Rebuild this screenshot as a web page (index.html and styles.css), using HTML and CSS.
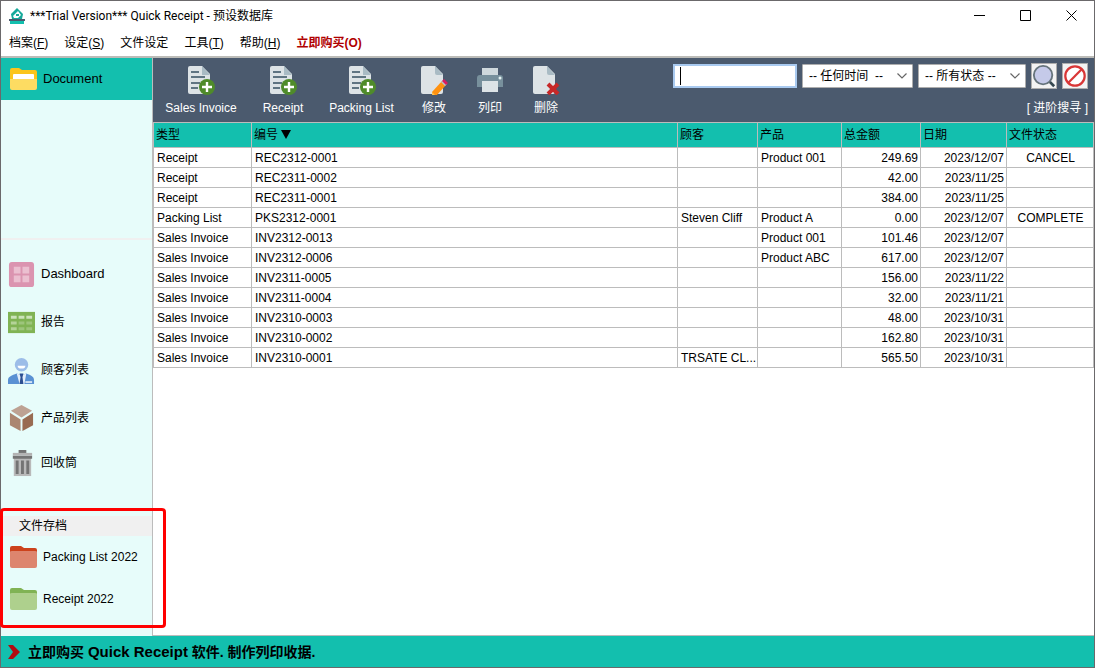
FILE: index.html
```html
<!DOCTYPE html>
<html lang="zh-CN">
<head>
<meta charset="utf-8">
<title>Quick Receipt</title>
<link rel="stylesheet" href="styles.css">
</head>
<body>
<svg class="defs" aria-hidden="true">
  <symbol id="page-add" viewBox="0 0 28 30">
    <path d="M3 1h12l8 8v18a2 2 0 0 1-2 2H3a2 2 0 0 1-2-2V3a2 2 0 0 1 2-2z" fill="#dde3e6"/>
    <path d="M15 1l8 9h-8z" fill="#a9bbc4"/>
    <path d="M4 7h8M4 12h14M4 18h9M4 23h7" stroke="#5f7482" stroke-width="2"/>
    <circle cx="20" cy="22" r="8" fill="#4f8b2a"/>
    <path d="M20 17v10M15 22h10" stroke="#fff" stroke-width="2.4"/>
  </symbol>
  <symbol id="page" viewBox="0 0 28 30">
    <path d="M3 1h12l8 8v18a2 2 0 0 1-2 2H3a2 2 0 0 1-2-2V3a2 2 0 0 1 2-2z" fill="#dde3e6"/>
    <path d="M15 1l8 9h-6a2 2 0 0 1-2-2z" fill="#a9bbc4"/>
  </symbol>
  <symbol id="chevron" viewBox="0 0 10 6"><path d="M.5.5L5 5 9.500.5" fill="none" stroke="#666" stroke-width="1.200"/></symbol>
</svg>
<div class="window">
  <header class="titlebar">
    <svg class="logo" viewBox="0 0 16 16"><path d="M8 0l6 6-1 5H3L2 6z" fill="#16a99a"/><path d="M4 8l5-5 3 4-3 3H5z" fill="#fff"/><path d="M7 6h3v2H7z" fill="#16a99a"/><path d="M0 11h16v2H0z" fill="#4b5a6d"/><path d="M1 13h14v3H1z" fill="#13bfae"/></svg>
    <h1>***Trial Version*** Quick Receipt - 预设数据库</h1>
    <div class="controls">
      <button aria-label="Minimize"><svg viewBox="0 0 11 11"><path d="M0 5.500h11" stroke="#000"/></svg></button>
      <button aria-label="Maximize"><svg viewBox="0 0 11 11"><path d="M.5.5h10v10H.5z" fill="none" stroke="#000"/></svg></button>
      <button aria-label="Close"><svg viewBox="0 0 11 11"><path d="M.5.5l10 10M10.500.5l-10 10" stroke="#000"/></svg></button>
    </div>
  </header>
  <nav class="menubar">
    <button>档案(<u>F</u>)</button>
    <button>设定(<u>S</u>)</button>
    <button>文件设定</button>
    <button>工具(<u>T</u>)</button>
    <button>帮助(<u>H</u>)</button>
    <button class="buy">立即购买(O)</button>
  </nav>
  <div class="body">
    <aside class="sidebar">
      <div class="folders">
        <a class="item current" href="#"><svg class="folder" viewBox="0 0 27 22"><path d="M0 2a2 2 0 0 1 2-2h7l3 2h13a2 2 0 0 1 2 2v8H0z" fill="#fbc51b"/><path d="M3 7a1 1 0 0 1 1-1h19a1 1 0 0 1 1 1v8H3z" fill="#fff"/><path d="M0 11h27v9a2 2 0 0 1-2 2H2a2 2 0 0 1-2-2z" fill="#fddc62"/></svg><span>Document</span></a>
      </div>
      <div class="links">
        <a class="item" href="#"><svg viewBox="0 0 28 28"><rect x="1" y="1" width="26" height="26" rx="3" fill="#db94b0"/><path d="M6 6h7v7H6zM15 6h7v7h-7zM6 15h7v7H6zM15 15h7v7h-7z" fill="#ebbfd0"/></svg><span>Dashboard</span></a>
        <a class="item" href="#"><svg viewBox="0 0 28 28"><path d="M0 3h28v22H0z" fill="#80b354"/><path d="M3 8.500h6M11 8.500h6M19 8.500h6" stroke="#cce2ba" stroke-width="3"/><path d="M3 14.500h6M3 20.500h6" stroke="#b4d398" stroke-width="3"/><path d="M11 14.500h6M19 14.500h6M11 20.500h6M19 20.500h6" stroke="#9dc57c" stroke-width="3"/></svg><span>报告</span></a>
        <a class="item" href="#"><svg viewBox="0 0 28 28"><circle cx="14" cy="8" r="7" fill="#9cbde8"/><path d="M10 9h8a4 3 0 0 1-8 0z" fill="#fff"/><path d="M0 28v-4c0-4 4-5 9-7l5 2 5-2c5 2 8 3 8 7v4z" fill="#5a91d3"/><path d="M9 17l5 2 5-2-2 11h-5z" fill="#e4eefa"/><path d="M12 17h4l-1 4 1 7h-4l1-7z" fill="#2d4f91"/><path d="M18 25h7v2h-7z" fill="#d4e3f5"/></svg><span>顾客列表</span></a>
        <a class="item" href="#"><svg viewBox="0 0 28 28"><path d="M14 0l11 6-11 7L3 6z" fill="#bda293"/><path d="M2 8l11 7v12L2 21z" fill="#ab8671"/><path d="M26 8l-11 7v12l11-6z" fill="#986b51"/></svg><span>产品列表</span></a>
        <a class="item" href="#"><svg viewBox="0 0 28 28"><path d="M6 7h18v20H6z" fill="#b9b9b9"/><path d="M11 0h8v3h-8zM5 6h20v3H5z" fill="#747474"/><path d="M5 3h20v3H5z" fill="#b3b3b3"/><path d="M9.500 11v14M15 11v14M20.500 11v14" stroke="#747474" stroke-width="3"/></svg><span>回收筒</span></a>
      </div>
      <div class="archive">
        <h2>文件存档</h2>
        <a class="item" href="#"><svg class="folder" viewBox="0 0 27 22"><path d="M0 2a2 2 0 0 1 2-2h9l3 2h11a2 2 0 0 1 2 2v5H0z" fill="#cc421c"/><path d="M0 6q0-1 2-1h23q2 0 2 1v14a2 2 0 0 1-2 2H2a2 2 0 0 1-2-2z" fill="#dd856e"/></svg><span>Packing List 2022</span></a>
        <a class="item" href="#"><svg class="folder" viewBox="0 0 27 22"><path d="M0 2a2 2 0 0 1 2-2h9l3 2h11a2 2 0 0 1 2 2v5H0z" fill="#80b354"/><path d="M0 6q0-1 2-1h23q2 0 2 1v14a2 2 0 0 1-2 2H2a2 2 0 0 1-2-2z" fill="#aed08d"/></svg><span>Receipt 2022</span></a>
      </div>
    </aside>
    <main class="main">
      <div class="toolbar">
        <div class="tools">
          <button><svg><use href="#page-add"/></svg>Sales Invoice</button>
          <button><svg><use href="#page-add"/></svg>Receipt</button>
          <button><svg><use href="#page-add"/></svg>Packing List</button>
          <button><svg viewBox="0 0 28 30"><use href="#page"/><path d="M12 27l10-11 4 4-10 11-4 0z" fill="#ff9210"/><path d="M12 27l4 4h-4z" fill="#ffc04a"/><path d="M21 17l2-2 4 4-2 2z" fill="#b8c4ca"/><path d="M22 16l2-2 4 4-2 2z" fill="#d81b60"/></svg>修改</button>
          <button><svg viewBox="0 0 28 30"><path d="M6 3h16v7H6z" fill="#cfd8dc"/><path d="M1 13a3 3 0 0 1 3-3h20a3 3 0 0 1 3 3v9H1z" fill="#78909c"/><path d="M6 16h16v11H6z" fill="#dde3e6"/><circle cx="24" cy="13" r="1.500" fill="#e6f4f4"/></svg>列印</button>
          <button><svg viewBox="0 0 28 30"><use href="#page"/><path d="M16 19l10 10M26 19L16 29" stroke="#c62828" stroke-width="4"/></svg>删除</button>
        </div>
        <form class="search">
          <label class="field"><input type="text" aria-label="搜寻"><span class="caret"></span></label>
          <label class="field time"><select aria-label="时间"><option>-- 任何时间 &nbsp;--</option></select><svg><use href="#chevron"/></svg></label>
          <label class="field state"><select aria-label="状态"><option>-- 所有状态 --</option></select><svg><use href="#chevron"/></svg></label>
          <button type="button" aria-label="搜寻"><svg viewBox="0 0 26 26"><path d="M18 18l6 6" stroke="#35474f" stroke-width="3"/><circle cx="12" cy="12" r="10" fill="#c5cae9" stroke="#66747c" stroke-width="2"/></svg></button>
          <button type="button" aria-label="清除"><svg viewBox="0 0 26 26"><circle cx="13" cy="13" r="10.500" fill="#fff" stroke="#d93636" stroke-width="2.400"/><path d="M6 20L20 6" stroke="#d93636" stroke-width="2.400"/></svg></button>
          <a href="#">[ 进阶搜寻 ]</a>
        </form>
      </div>
      <table>
        <colgroup><col class="c-type"><col><col class="c-customer"><col class="c-product"><col class="c-total"><col class="c-date"><col class="c-status"></colgroup>
        <thead><tr><th>类型</th><th>编号 <svg class="sort" viewBox="0 0 10 9"><path d="M0 0h10L5 9z"/></svg></th><th>顾客</th><th>产品</th><th>总金额</th><th>日期</th><th>文件状态</th></tr></thead>
        <tbody>
          <tr><td>Receipt</td><td>REC2312-0001</td><td></td><td>Product 001</td><td>249.69</td><td>2023/12/07</td><td>CANCEL</td></tr>
          <tr><td>Receipt</td><td>REC2311-0002</td><td></td><td></td><td>42.00</td><td>2023/11/25</td><td></td></tr>
          <tr><td>Receipt</td><td>REC2311-0001</td><td></td><td></td><td>384.00</td><td>2023/11/25</td><td></td></tr>
          <tr><td>Packing List</td><td>PKS2312-0001</td><td>Steven Cliff</td><td>Product A</td><td>0.00</td><td>2023/12/07</td><td>COMPLETE</td></tr>
          <tr><td>Sales Invoice</td><td>INV2312-0013</td><td></td><td>Product 001</td><td>101.46</td><td>2023/12/07</td><td></td></tr>
          <tr><td>Sales Invoice</td><td>INV2312-0006</td><td></td><td>Product ABC</td><td>617.00</td><td>2023/12/07</td><td></td></tr>
          <tr><td>Sales Invoice</td><td>INV2311-0005</td><td></td><td></td><td>156.00</td><td>2023/11/22</td><td></td></tr>
          <tr><td>Sales Invoice</td><td>INV2311-0004</td><td></td><td></td><td>32.00</td><td>2023/11/21</td><td></td></tr>
          <tr><td>Sales Invoice</td><td>INV2310-0003</td><td></td><td></td><td>48.00</td><td>2023/10/31</td><td></td></tr>
          <tr><td>Sales Invoice</td><td>INV2310-0002</td><td></td><td></td><td>162.80</td><td>2023/10/31</td><td></td></tr>
          <tr><td>Sales Invoice</td><td>INV2310-0001</td><td>TRSATE CL...</td><td></td><td>565.50</td><td>2023/10/31</td><td></td></tr>
        </tbody>
      </table>
    </main>
  </div>
  <footer class="promo">
    <svg viewBox="0 0 12 14"><path d="M0 0h5l7 7-7 7H0l5-7z" fill="#b30d12"/></svg>
    <a href="#">立即购买 <b>Quick Receipt</b> 软件. 制作列印收据.</a>
  </footer>
</div>
</body>
</html>
```
FILE: styles.css
```css
* { box-sizing: border-box; }
body { margin: 0; font: 12px/16px "Liberation Sans", "Noto Sans CJK SC", sans-serif; color: #000; }
button, input, select { font: inherit; color: inherit; }
button { border: 0; padding: 0; background: none; }
a { color: inherit; text-decoration: none; }
svg { display: block; flex: none; }
.defs { display: none; }

.window { display: flex; flex-direction: column; min-height: 100vh; border: 1px solid #6b696b; background: #fff; }

.titlebar { display: flex; align-items: center; gap: 5px; height: 29px; padding-left: 8px; }
.logo { width: 16px; height: 16px; }
.titlebar h1 { flex: 1; margin: 0; font: 12px/16px Roboto, "Noto Sans CJK SC", sans-serif; }
.controls { display: flex; }
.controls button { width: 46px; height: 28px; display: grid; place-items: center; }
.controls svg { width: 11px; height: 11px; }

.menubar { display: flex; gap: 16px; height: 28px; padding: 0 8px; border-bottom: 2px solid #bcbcb8; }
.menubar .buy { color: #b00000; font-weight: bold; }

.body { flex: 1; display: flex; }
.sidebar { width: 151px; flex: none; display: flex; flex-direction: column; background: #e7fcfa; }
.item { display: flex; align-items: center; gap: 6px; height: 42px; padding-left: 9px; }
.item svg { width: 27px; height: 27px; }
.item .folder { height: 22px; }
.folders { height: 182px; border-bottom: 2px solid #f0f0f0; }
.current { background: #13bfae; font-size: 13px; }
.links { padding-top: 10px; font-size: 12px; }
.links .item { height: 48px; padding-left: 7px; }
.links .item:first-child { font-size: 13px; }
.links .item:last-child { height: 42px; }
.archive { position: relative; margin-top: auto; padding-bottom: 16px; }
.archive::after { content: ""; position: absolute; inset: -8px -14px 8px -1px; border: 3px solid #f00; border-radius: 4px; pointer-events: none; }
.archive h2 { margin: 0; padding: 2px 18px; background: #f0f0f0; font: inherit; }

.main { flex: 1; min-width: 0; border-left: 1px solid #bcbcbc; border-bottom: 1px solid #bcbcbc; }
.toolbar { display: flex; justify-content: space-between; height: 64px; background: #4b5a6e; color: #fff; }
.tools { display: grid; grid-template-columns: 96px 68px 89px 56px 56px 56px; }
.tools button { display: flex; flex-direction: column; align-items: center; gap: 5px; padding-top: 7px; }
.tools svg { width: 28px; height: 30px; }
.search { display: grid; grid-template-columns: 124px 111px 108px 26px 26px; grid-template-rows: 26px 18px; column-gap: 5px; row-gap: 10px; padding: 5px 6px 0 0; align-items: center; color: #000; }
.field { display: grid; height: 24px; align-items: center; }
.field > * { grid-area: 1 / 1; }
.field input { width: 100%; height: 24px; border: 2px solid #a9caf0; background: #fff; outline: 0; }
.caret { width: 1px; height: 18px; margin-left: 7px; background: #000; }
.field select { appearance: none; width: 100%; height: 24px; padding: 0 20px 0 6px; border: 1px solid #adadad; background: #fff; border-radius: 1px; }
.field svg { width: 10px; height: 6px; margin-right: 6px; justify-self: end; pointer-events: none; }
.search button { width: 26px; height: 26px; border: 1px solid #adadad; background: #f3f3f3; }
.search button svg { width: 24px; height: 24px; }
.search a { grid-column: 1 / -1; justify-self: end; color: #fff; }

table { width: 100%; table-layout: fixed; border-collapse: collapse; }
.c-type { width: 98px; }
.c-customer { width: 80px; }
.c-product { width: 84px; }
.c-total { width: 79px; }
.c-date { width: 86px; }
.c-status { width: 87px; }
th, td { border: 1px solid #bcbcbc; padding: 0 2px 0 3px; overflow: hidden; white-space: nowrap; }
th { height: 25px; padding-left: 2px; background: #13bfae; font-weight: normal; text-align: left; }
td { height: 20px; padding-top: 1px; line-height: 18px; }
td:nth-child(5), td:nth-child(6) { text-align: right; }
td:nth-child(7) { text-align: center; }
.sort { display: inline-block; width: 10px; height: 9px; }

.promo { display: flex; align-items: center; gap: 8px; height: 31px; padding-left: 7px; background: #13bfae; font-size: 14px; font-weight: bold; }
.promo svg { width: 12px; height: 14px; }
.promo b { font-size: 15px; }
```
